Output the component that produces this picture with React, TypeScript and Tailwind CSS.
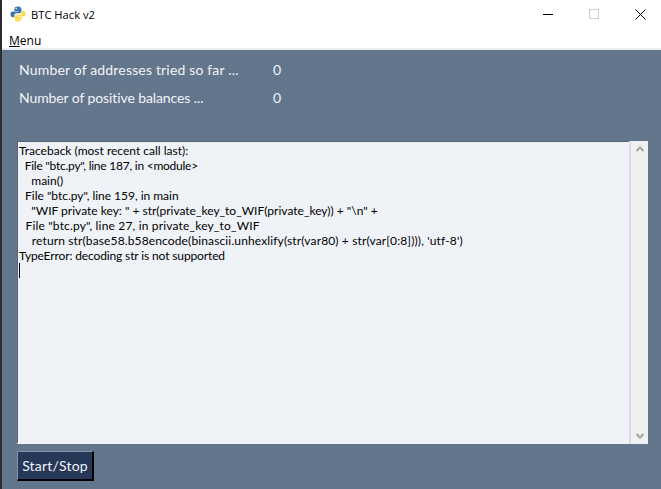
import React from "react";

const lines: [string, string][] = [
  ["Traceback (most recent call last):", "tracking-normal"],
  ['  File "btc.py", line 187, in <module>', "tracking-[-0.24px]"],
  ["    main()", "tracking-normal"],
  ['  File "btc.py", line 159, in main', "tracking-[-0.02px]"],
  ['    "WIF private key: " + str(private_key_to_WIF(private_key)) + "\\n" +', "tracking-normal"],
  ['  File "btc.py", line 27, in private_key_to_WIF', "tracking-[0.17px]"],
  ["    return str(base58.b58encode(binascii.unhexlify(str(var80) + str(var[0:8]))), 'utf-8')", "tracking-[0.13px]"],
  ["TypeError: decoding str is not supported", "tracking-[-0.13px]"],
];

function PythonLogo() {
  return (
    <svg className="mb-[2px]" width="16" height="16" viewBox="0 0 16 16">
      <path d="M8 0.500C5.300 0.500 4.400 1.600 4.400 3V4.900H8.200V5.500H2.800C1.300 5.500 0.500 6.600 0.500 8.200S1.300 11.200 2.800 11.200H4.300V9.300C4.300 8 5.300 7.200 6.500 7.200H9.400C10.500 7.200 11.400 6.300 11.400 5.200V3C11.400 1.600 10.100 0.500 8 0.500Z" fill="#3a76ab" />
      <path d="M8 15.500C10.700 15.500 11.600 14.400 11.600 13V11.100H7.800V10.500H13.200C14.700 10.500 15.500 9.400 15.500 7.800S14.700 4.800 13.200 4.800H11.700V6.700C11.700 8 10.700 8.800 9.500 8.800H6.600C5.500 8.800 4.600 9.700 4.600 10.800V13C4.600 14.400 5.900 15.500 8 15.500Z" fill="#fdd94f" />
      <circle cx="6.200" cy="2.500" r="0.700" fill="#fff" />
      <circle cx="9.800" cy="13.500" r="0.700" fill="#fff" />
    </svg>
  );
}

export default function App() {
  const body = "font-['Lato','Open_Sans',sans-serif]";
  return (
    <div className="flex h-[489px] w-[661px] overflow-hidden bg-white">
      <div className="w-[2px] bg-[#2e2e2e]" />
      <div className="flex min-w-0 flex-1 flex-col">
        <div className="flex h-[30px] items-center pl-[8px] font-['Open_Sans',sans-serif] text-[11.2px] text-black">
          <PythonLogo />
          <span className="ml-[5px]">BTC Hack v2</span>
          <div className="mb-[2px] ml-auto flex items-center gap-[36px] pr-[15px]">
            <div className="h-[1px] w-[10px] bg-black" />
            <div className="h-[10px] w-[10px] border border-[#cccccc]" />
            <svg width="11" height="11" viewBox="0 0 11 11"><path d="M.5.5l10 10M10.500.5l-10 10" stroke="#000" fill="none" /></svg>
          </div>
        </div>
        <div className="flex h-[18px] items-center pl-[7px] pt-[3px] font-['Open_Sans',sans-serif] text-[12px] text-black">
          <span><span className="underline">M</span>enu</span>
        </div>
        <div className="h-[2px] bg-[#e9edf2]" />
        <div className={`flex flex-1 flex-col bg-[#64768c] pl-[15px] pr-[13px] ${body}`}>
          <div className="mt-[9px] flex h-[20px] items-center pl-[2px] text-[14px] text-[#f0f4f8]">
            <span className="w-[254px] tracking-[0.17px]">Number of addresses tried so far ...</span><span>0</span>
          </div>
          <div className="mt-[8px] flex h-[20px] items-center pl-[2px] text-[14px] text-[#f0f4f8]">
            <span className="w-[254px] tracking-[-0.1px]">Number of positive balances ...</span><span>0</span>
          </div>
          <div className="mt-[34px] flex h-[303px]">
            <div className="flex-1 border-l border-t border-[#566579] border-b-2 border-b-[#f0f4f8] bg-[#eff3f8] pl-[1px] pt-[1px] text-black">
              {lines.map(([t, c]) => (
                <div key={t} className={`h-[15px] whitespace-pre text-[12px] leading-[15px] ${c}`}>{t}</div>
              ))}
              <div className="h-[15px] w-[1px] bg-black" />
            </div>
            <div className="w-[2px] bg-[#d9dee5]" />
            <div className="flex w-[17px] flex-col items-center justify-between bg-[#f0f0f0] py-[5px]">
              <svg width="8" height="6" viewBox="0 0 8 6"><path d="M.5 5L4 1.500 7.500 5" stroke="#a6a6a6" strokeWidth="2" fill="none" /></svg>
              <svg width="8" height="6" viewBox="0 0 8 6"><path d="M.5 1L4 4.500 7.500 1" stroke="#a6a6a6" strokeWidth="2" fill="none" /></svg>
            </div>
          </div>
          <button className="mt-[7px] h-[30px] w-[77px] border-l border-t border-[#8494a8] border-r-2 border-b-2 border-r-black border-b-black bg-[#263757] text-[14px] tracking-[0.2px] text-[#f0f4f8]">
            Start/Stop
          </button>
        </div>
      </div>
    </div>
  );
}
